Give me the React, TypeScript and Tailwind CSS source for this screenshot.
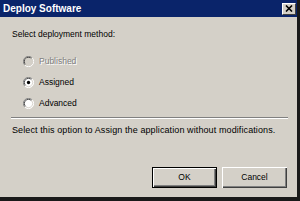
import React from "react";

function Radio({ checked, disabled }: { checked?: boolean; disabled?: boolean }) {
  return (
    <svg width="11" height="11" viewBox="0 0 12 12" className="shrink-0">
      <circle cx="6" cy="6" r="5.5" fill={disabled ? "#d4d0c8" : "#ffffff"} />
      <path d="M10 2 A5.5 5.5 0 0 0 2 10" stroke="#808080" strokeWidth="1" fill="none" />
      <path d="M9.2 2.8 A4.5 4.5 0 0 0 2.8 9.2" stroke="#404040" strokeWidth="1" fill="none" />
      <path d="M2 10 A5.5 5.5 0 0 0 10 2" stroke="#ffffff" strokeWidth="1" fill="none" />
      <path d="M2.8 9.2 A4.5 4.5 0 0 0 9.2 2.8" stroke="#d4d0c8" strokeWidth="1" fill="none" />
      {disabled && <circle cx="6" cy="6" r="3.8" fill="#d4d0c8" />}
      {checked && <circle cx="6" cy="6" r="1.8" fill="#000000" />}
    </svg>
  );
}

export default function App() {
  const font = { fontFamily: '"Liberation Sans", Arial, sans-serif' };
  return (
    <div
      className="w-[300px] h-[201px] bg-[#d4d0c8] flex flex-col border-r-[3px] border-b-[4px] border-[#1a1a1a] overflow-hidden"
      style={font}
    >
      <div className="h-[17px] bg-[#0a246a] flex items-center justify-between pl-[3px] pr-[1px]">
        <span className="text-white font-bold text-[10px] leading-none">Deploy Software</span>
        <div className="w-[14px] h-[12px] bg-[#d4d0c8] border-t border-l border-white border-r border-b border-r-[#404040] border-b-[#404040] flex items-center justify-center">
          <svg width="8" height="7" viewBox="0 0 8 7">
            <path d="M1 0.5 L7 6.5 M7 0.5 L1 6.5" stroke="#000" strokeWidth="1.6" />
          </svg>
        </div>
      </div>
      <div className="flex flex-col pl-[12px] pr-[9px] flex-1">
        <div className="mt-[12px] text-[8.5px] leading-[10px] text-black">Select deployment method:</div>
        <div className="flex flex-col mt-[17px] gap-[10px] pl-[11px]">
          <div className="flex items-center gap-[5px] h-[11px]">
            <Radio disabled />
            <span className="text-[8.5px] leading-none text-[#808080] [text-shadow:1px_1px_0_#ffffff]">Published</span>
          </div>
          <div className="flex items-center gap-[5px] h-[11px]">
            <Radio checked />
            <span className="text-[8.5px] leading-none text-black">Assigned</span>
          </div>
          <div className="flex items-center gap-[5px] h-[11px]">
            <Radio />
            <span className="text-[8.5px] leading-none text-black">Advanced</span>
          </div>
        </div>
        <div className="mt-[8px] ml-[-1px] h-[2px] border-t border-t-[#808080] border-b border-b-white" />
        <div className="mt-[6px] text-[9px] tracking-[0.1px] leading-[10px] text-black">
          Select this option to Assign the application without modifications.
        </div>
        <div className="flex justify-end gap-[5px] mt-[32px] pr-[1px]">
          <button className="w-[65px] h-[21px] border border-black bg-[#d4d0c8] text-[8.5px] text-black shadow-[inset_1px_1px_0_#ffffff,inset_-1px_-1px_0_#404040,inset_-2px_-2px_0_#808080]">
            OK
          </button>
          <button className="w-[65px] h-[21px] bg-[#d4d0c8] text-[8.5px] text-black shadow-[inset_1px_1px_0_#ffffff,inset_-1px_-1px_0_#404040,inset_-2px_-2px_0_#808080]">
            Cancel
          </button>
        </div>
      </div>
    </div>
  );
}
